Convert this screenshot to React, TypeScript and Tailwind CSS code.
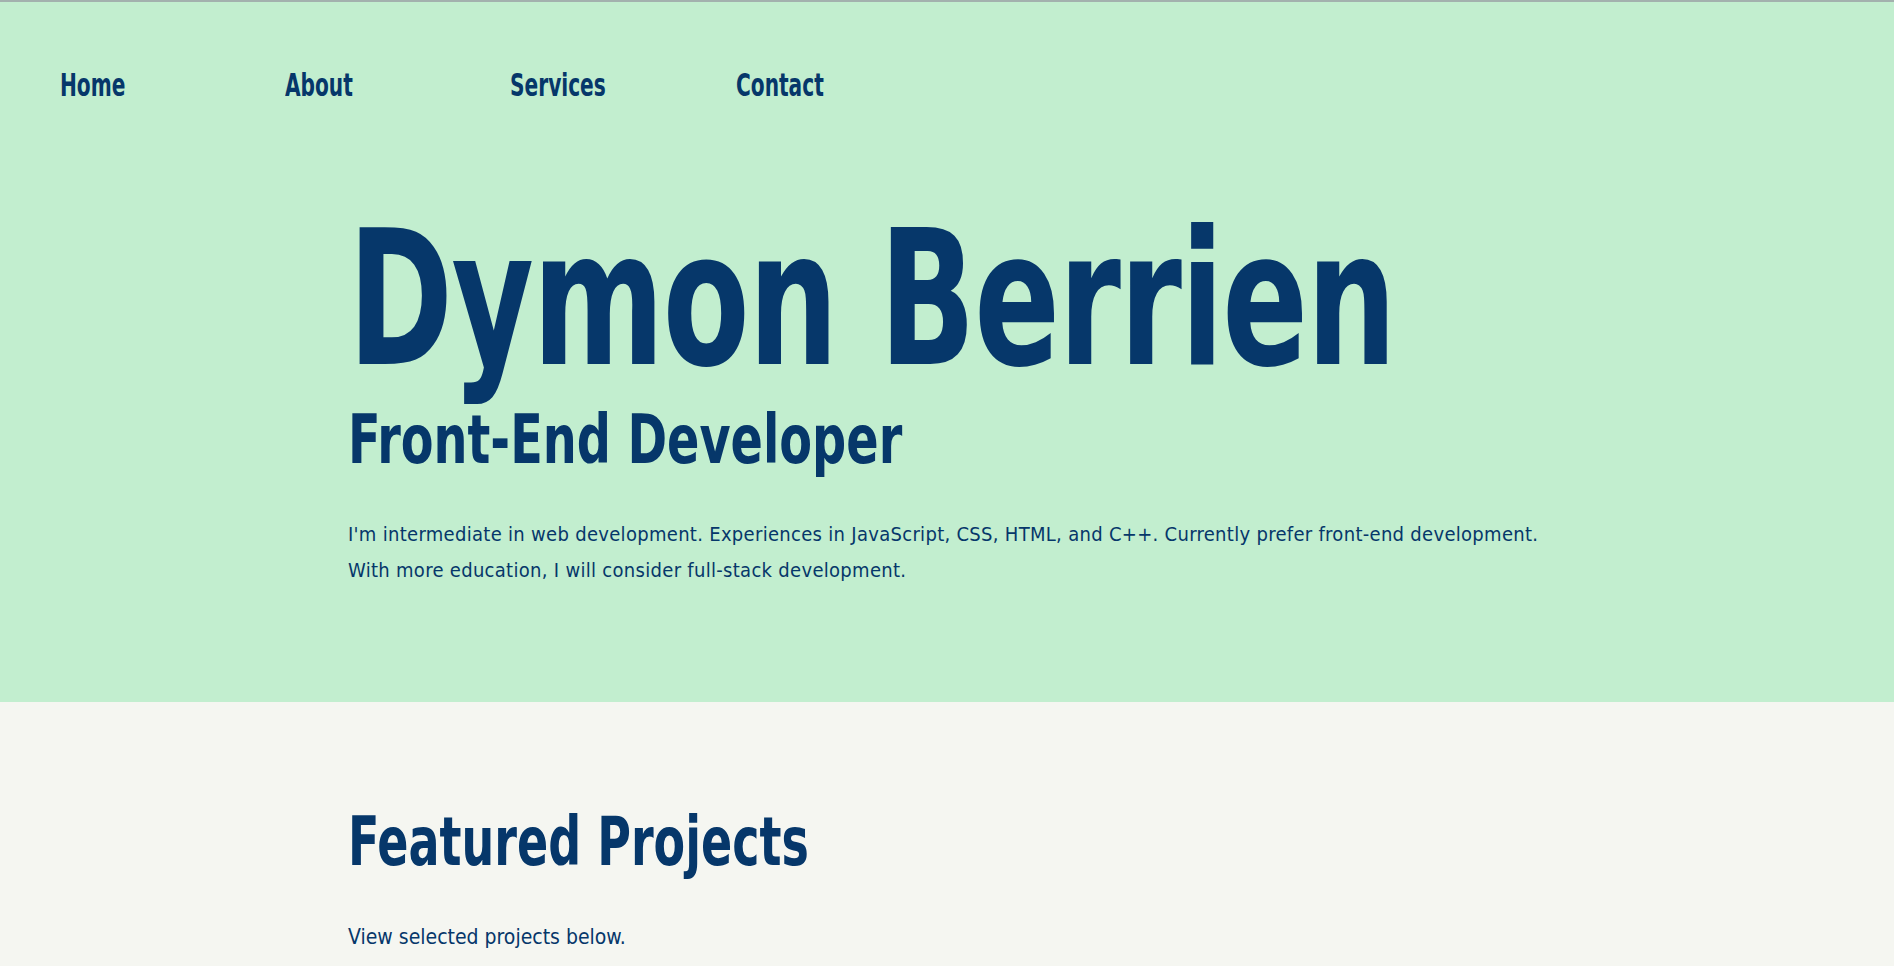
import React from "react";

const font = { fontFamily: '"DejaVu Sans Condensed", "DejaVu Sans", sans-serif' };

export default function App() {
  return (
    <div className="min-h-screen bg-[#f5f6f1] text-[#06376a]" style={font}>
      <header className="bg-[#c2eecf] border-t-2 border-[#a3b1ae] h-[702px] flex flex-col">
        <nav className="flex pl-[60px] pt-[63px]">
          <a className="w-[225px] text-[32px] font-bold leading-[40px] origin-left scale-x-[0.7]">Home</a>
          <a className="w-[225px] text-[32px] font-bold leading-[40px] origin-left scale-x-[0.7]">About</a>
          <a className="w-[226px] text-[32px] font-bold leading-[40px] origin-left scale-x-[0.7]">Services</a>
          <a className="w-[225px] text-[32px] font-bold leading-[40px] origin-left scale-x-[0.7]">Contact</a>
        </nav>
        <div className="pl-[348px] pt-[94px]">
          <h1 className="text-[187px] font-bold leading-[200px] tracking-[-2px] origin-left scale-x-[0.752] whitespace-nowrap">
            Dymon Berrien
          </h1>
          <h2 className="text-[68px] font-bold leading-[76px] mt-[3px] origin-left scale-x-[0.78] whitespace-nowrap">
            Front-End Developer
          </h2>
          <p className="text-[20px] leading-[36px] mt-[38px] tracking-[0.3px] whitespace-nowrap">
            I'm intermediate in web development. Experiences in JavaScript, CSS, HTML, and C++. Currently prefer front-end development.
            <br />
            With more education, I will consider full-stack development.
          </p>
        </div>
      </header>
      <section className="pl-[348px] pt-[100px] pb-[40px]">
        <h2 className="text-[68px] font-bold leading-[80px] origin-left scale-x-[0.752] whitespace-nowrap">Featured Projects</h2>
        <p className="text-[21px] leading-[36px] mt-[37px]">View selected projects below.</p>
      </section>
    </div>
  );
}
